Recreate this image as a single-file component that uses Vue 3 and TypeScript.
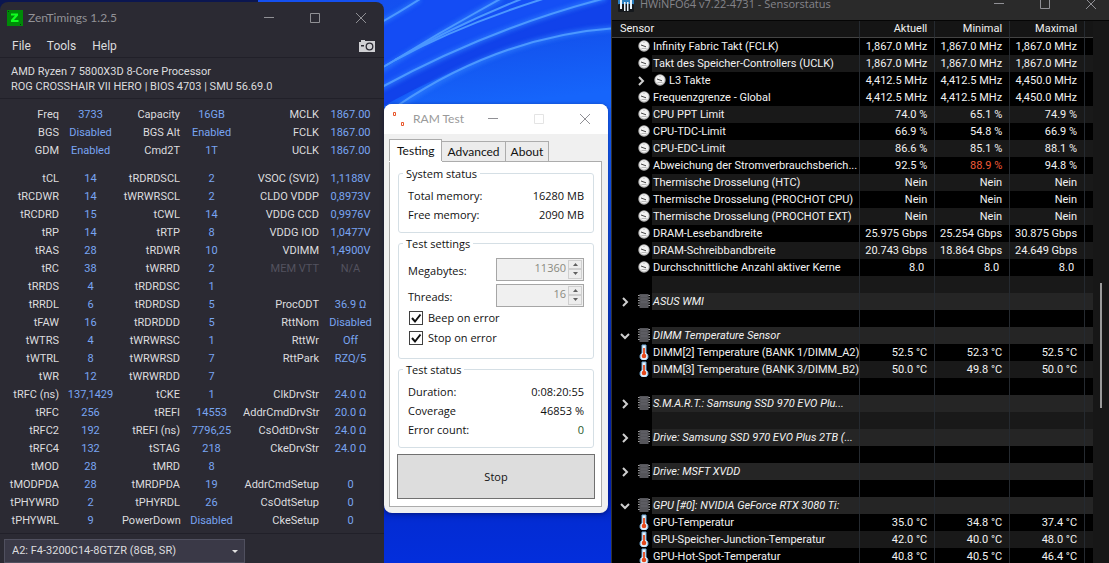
<script setup lang="ts">
import { ref } from 'vue'

type Pair = [label: string, value: string]

const clocks: Pair[][] = [
  [['Freq', '3733'], ['Capacity', '16GB'], ['MCLK', '1867.00']],
  [['BGS', 'Disabled'], ['BGS Alt', 'Enabled'], ['FCLK', '1867.00']],
  [['GDM', 'Enabled'], ['Cmd2T', '1T'], ['UCLK', '1867.00']],
]

const timings: Pair[][] = [
  [['tCL', '14'], ['tRDRDSCL', '2'], ['VSOC (SVI2)', '1,1188V']],
  [['tRCDWR', '14'], ['tWRWRSCL', '2'], ['CLDO VDDP', '0,8973V']],
  [['tRCDRD', '15'], ['tCWL', '14'], ['VDDG CCD', '0,9976V']],
  [['tRP', '14'], ['tRTP', '8'], ['VDDG IOD', '1,0477V']],
  [['tRAS', '28'], ['tRDWR', '10'], ['VDIMM', '1,4900V']],
  [['tRC', '38'], ['tWRRD', '2'], ['MEM VTT', 'N/A']],
  [['tRRDS', '4'], ['tRDRDSC', '1'], ['', '']],
  [['tRRDL', '6'], ['tRDRDSD', '5'], ['ProcODT', '36.9 Ω']],
  [['tFAW', '16'], ['tRDRDDD', '5'], ['RttNom', 'Disabled']],
  [['tWTRS', '4'], ['tWRWRSC', '1'], ['RttWr', 'Off']],
  [['tWTRL', '8'], ['tWRWRSD', '7'], ['RttPark', 'RZQ/5']],
  [['tWR', '12'], ['tWRWRDD', '7'], ['', '']],
  [['tRFC (ns)', '137,1429'], ['tCKE', '1'], ['ClkDrvStr', '24.0 Ω']],
  [['tRFC', '256'], ['tREFI', '14553'], ['AddrCmdDrvStr', '20.0 Ω']],
  [['tRFC2', '192'], ['tREFI (ns)', '7796,25'], ['CsOdtDrvStr', '24.0 Ω']],
  [['tRFC4', '132'], ['tSTAG', '218'], ['CkeDrvStr', '24.0 Ω']],
  [['tMOD', '28'], ['tMRD', '8'], ['', '']],
  [['tMODPDA', '28'], ['tMRDPDA', '19'], ['AddrCmdSetup', '0']],
  [['tPHYWRD', '2'], ['tPHYRDL', '26'], ['CsOdtSetup', '0']],
  [['tPHYWRL', '9'], ['PowerDown', 'Disabled'], ['CkeSetup', '0']],
]

type Kind = 'clock' | 'temp' | 'group' | 'blank'
interface Row {
  kind: Kind
  name?: string
  values?: string[]
  shaded?: boolean
  arrow?: 'right' | 'down'
  child?: boolean
  warn?: boolean
}

const rows: Row[] = [
  { kind: 'clock', name: 'Infinity Fabric Takt (FCLK)', values: ['1,867.0 MHz', '1,867.0 MHz', '1,867.0 MHz'] },
  { kind: 'clock', name: 'Takt des Speicher-Controllers (UCLK)', values: ['1,867.0 MHz', '1,867.0 MHz', '1,867.0 MHz'], shaded: true },
  { kind: 'clock', name: 'L3 Takte', values: ['4,412.5 MHz', '4,412.5 MHz', '4,450.0 MHz'], arrow: 'right', child: true },
  { kind: 'clock', name: 'Frequenzgrenze - Global', values: ['4,412.5 MHz', '4,412.5 MHz', '4,450.0 MHz'] },
  { kind: 'clock', name: 'CPU PPT Limit', values: ['74.0 %', '65.1 %', '74.9 %'], shaded: true },
  { kind: 'clock', name: 'CPU-TDC-Limit', values: ['66.9 %', '54.8 %', '66.9 %'] },
  { kind: 'clock', name: 'CPU-EDC-Limit', values: ['86.6 %', '85.1 %', '88.1 %'], shaded: true },
  { kind: 'clock', name: 'Abweichung der Stromverbrauchsberich...', values: ['92.5 %', '88.9 %', '94.8 %'], warn: true },
  { kind: 'clock', name: 'Thermische Drosselung (HTC)', values: ['Nein', 'Nein', 'Nein'], shaded: true },
  { kind: 'clock', name: 'Thermische Drosselung (PROCHOT CPU)', values: ['Nein', 'Nein', 'Nein'] },
  { kind: 'clock', name: 'Thermische Drosselung (PROCHOT EXT)', values: ['Nein', 'Nein', 'Nein'], shaded: true },
  { kind: 'clock', name: 'DRAM-Lesebandbreite', values: ['25.975 Gbps', '25.254 Gbps', '30.875 Gbps'] },
  { kind: 'clock', name: 'DRAM-Schreibbandbreite', values: ['20.743 Gbps', '18.864 Gbps', '24.649 Gbps'], shaded: true },
  { kind: 'clock', name: 'Durchschnittliche Anzahl aktiver Kerne', values: ['8.0 ', '8.0 ', '8.0 '] },
  { kind: 'blank', shaded: true },
  { kind: 'group', name: 'ASUS WMI', arrow: 'right' },
  { kind: 'blank' },
  { kind: 'group', name: 'DIMM Temperature Sensor', arrow: 'down' },
  { kind: 'temp', name: 'DIMM[2] Temperature (BANK 1/DIMM_A2)', values: ['52.5 °C', '52.3 °C', '52.5 °C'] },
  { kind: 'temp', name: 'DIMM[3] Temperature (BANK 3/DIMM_B2)', values: ['50.0 °C', '49.8 °C', '50.0 °C'], shaded: true },
  { kind: 'blank' },
  { kind: 'group', name: 'S.M.A.R.T.: Samsung SSD 970 EVO Plu...', arrow: 'right' },
  { kind: 'blank', shaded: true },
  { kind: 'group', name: 'Drive: Samsung SSD 970 EVO Plus 2TB (...', arrow: 'right' },
  { kind: 'blank' },
  { kind: 'group', name: 'Drive: MSFT XVDD', arrow: 'right' },
  { kind: 'blank' },
  { kind: 'group', name: 'GPU [#0]: NVIDIA GeForce RTX 3080 Ti:', arrow: 'down' },
  { kind: 'temp', name: 'GPU-Temperatur', values: ['35.0 °C', '34.8 °C', '37.4 °C'] },
  { kind: 'temp', name: 'GPU-Speicher-Junction-Temperatur', values: ['42.0 °C', '40.0 °C', '48.0 °C'], shaded: true },
  { kind: 'temp', name: 'GPU-Hot-Spot-Temperatur', values: ['40.8 °C', '40.5 °C', '46.4 °C'] },
]

const beep = ref(true)
const stopOnError = ref(true)
const megabytes = ref('11360')
const threads = ref('16')
</script>

<template>
  <main class="desktop">
    <svg class="wallpaper" viewBox="0 0 1109 563" preserveAspectRatio="none" aria-hidden="true">
      <defs>
        <linearGradient id="sky" x1="0" y1="0" x2="0" y2="1">
          <stop offset="0" stop-color="#1450f0" />
          <stop offset="0.2" stop-color="#1560fa" />
          <stop offset="0.5" stop-color="#0c40d0" />
          <stop offset="0.7" stop-color="#0426b0" />
          <stop offset="0.88" stop-color="#0223b8" />
          <stop offset="0.93" stop-color="#032cd4" />
          <stop offset="1" stop-color="#032edc" />
        </linearGradient>
        <linearGradient id="fold" x1="0" y1="0" x2="0.3" y2="1">
          <stop offset="0" stop-color="#124be8" />
          <stop offset="1" stop-color="#1665fb" />
        </linearGradient>
        <filter id="soft" x="-10%" y="-10%" width="120%" height="120%">
          <feGaussianBlur stdDeviation="2" />
        </filter>
      </defs>
      <rect width="1109" height="563" fill="url(#sky)" />
      <rect width="258" height="10" fill="#0b1650" />
      <path d="M380 22 L420 0 L500 0 Q430 38 380 72Z" fill="#144cf4" />
      <path d="M380 72 Q450 28 520 0 L616 0 L616 2 Q490 30 380 88Z" fill="#154ff5" />
      <path d="M380 88 Q500 22 616 -2 L616 27 Q500 40 380 108Z" fill="#1142ea" />
      <path d="M395 108 Q500 38 616 27 L616 108Z" fill="url(#fold)" />
      <g fill="none" stroke="#2f80ff" stroke-width="5" opacity="0.7" filter="url(#soft)">
        <path d="M380 23 Q398 13 420 -1" />
        <path d="M380 71 Q440 32 502 -2" />
        <path d="M380 89 Q490 28 606 -2" />
        <path d="M395 109 Q500 36 616 28" />
      </g>
      <g fill="none" stroke="#4c98ff" stroke-width="2">
        <path d="M380 23 Q398 13 420 -1" />
        <path d="M380 69 Q440 32 502 -2" />
        <path d="M385 66 Q448 28 524 -2" />
        <path d="M395 60 Q460 25 546 -2" />
        <path d="M380 88 Q490 28 606 -2" />
        <path d="M397 106 Q500 36 616 28" />
      </g>
    </svg>

    <section class="zen" aria-label="ZenTimings">
      <header class="zen-title">
        <svg class="zen-logo" viewBox="0 0 16 16" aria-hidden="true">
          <rect width="16" height="16" fill="#008a08" />
          <path d="M4 3.5h7v2L7 10h4.500v2H4v-2l4-4.500H4z" fill="#10ff20" />
          <path d="M1 1h1v1H1zM13 14h1v1h-1z" fill="#03380a" />
        </svg>
        <h1>ZenTimings 1.2.5</h1>
        <div class="controls">
          <button type="button" aria-label="Minimize"><svg viewBox="0 0 12 12"><path d="M1 5.500h10" /></svg></button>
          <button type="button" aria-label="Maximize"><svg viewBox="0 0 12 12"><path d="M1.500 1.500h9v9h-9z" /></svg></button>
          <button type="button" aria-label="Close"><svg viewBox="0 0 12 12"><path d="M1 1l10 10M11 1L1 11" /></svg></button>
        </div>
      </header>
      <nav class="zen-menu">
        <button type="button">File</button>
        <button type="button">Tools</button>
        <button type="button">Help</button>
        <button type="button" class="camera" aria-label="Screenshot">
          <svg viewBox="0 0 16 12"><path d="M0 2h2V0h4v1h10v11H0z" fill="#d0d0d4" /><circle cx="10.500" cy="6.500" r="3.300" fill="none" stroke="#2b2a33" stroke-width="1.300" /><path d="M2 5h3v1.500H2z" fill="#2b2a33" /></svg>
        </button>
      </nav>
      <div class="zen-cpu">
        <p>AMD Ryzen 7 5800X3D 8-Core Processor</p>
        <p>ROG CROSSHAIR VII HERO | BIOS 4703 | SMU 56.69.0</p>
      </div>
      <table class="zen-table">
        <colgroup><col class="l1"><col class="v"><col class="l2"><col class="v"><col class="l3"><col class="v"></colgroup>
        <tbody>
          <tr v-for="(line, i) in clocks" :key="i">
            <template v-for="pair in line" :key="pair[0]"><th scope="row">{{ pair[0] }}</th><td>{{ pair[1] }}</td></template>
          </tr>
        </tbody>
        <tbody class="later">
          <tr v-for="(line, i) in timings" :key="i">
            <template v-for="(pair, j) in line" :key="j"><th scope="row" :class="{ off: pair[1] === 'N/A' }">{{ pair[0] }}</th><td :class="{ off: pair[1] === 'N/A' }">{{ pair[1] }}</td></template>
          </tr>
        </tbody>
      </table>
      <footer class="zen-foot">
        <select aria-label="Memory module"><option>A2: F4-3200C14-8GTZR (8GB, SR)</option></select>
        <svg class="caret" viewBox="0 0 6 3" aria-hidden="true"><path d="M0 0h6L3 3z" fill="#e0e0e0" /></svg>
      </footer>
    </section>

    <section class="ram" aria-label="RAM Test">
      <header class="ram-title">
        <svg class="ram-logo" viewBox="0 0 16 16" aria-hidden="true"><path d="M1.500 1.500h2v3h-2zM9.500 11.500h2v3h-2z" fill="#fff" stroke="#e8582c" /></svg>
        <h2>RAM Test</h2>
        <div class="controls">
          <button type="button" aria-label="Minimize"><svg viewBox="0 0 12 12"><path d="M1 5.500h10" /></svg></button>
          <button type="button" aria-label="Maximize" disabled><svg viewBox="0 0 12 12"><path d="M1.500 1.500h9v9h-9z" /></svg></button>
          <button type="button" aria-label="Close"><svg viewBox="0 0 12 12"><path d="M1 1l10 10M11 1L1 11" /></svg></button>
        </div>
      </header>
      <div class="ram-body">
        <div class="tabs" role="tablist">
          <button type="button" role="tab" aria-selected="true" class="active">Testing</button>
          <button type="button" role="tab" aria-selected="false">Advanced</button>
          <button type="button" role="tab" aria-selected="false">About</button>
        </div>
        <div class="pane">
          <fieldset class="status">
            <legend>System status</legend>
            <p><span>Total memory:</span><span>16280 MB</span></p>
            <p><span>Free memory:</span><span>2090 MB</span></p>
          </fieldset>
          <fieldset class="settings">
            <legend>Test settings</legend>
            <div class="field">
              <label for="mb">Megabytes:</label>
              <div class="spin">
                <input id="mb" v-model="megabytes" type="text" disabled>
                <div class="steps">
                  <button type="button" aria-label="More megabytes" disabled><svg viewBox="0 0 5 3"><path d="M0 3h5L2.500 0z" /></svg></button>
                  <button type="button" aria-label="Fewer megabytes" disabled><svg viewBox="0 0 5 3"><path d="M0 0h5L2.500 3z" /></svg></button>
                </div>
              </div>
            </div>
            <div class="field">
              <label for="threads">Threads:</label>
              <div class="spin">
                <input id="threads" v-model="threads" type="text" disabled>
                <div class="steps">
                  <button type="button" aria-label="More threads" disabled><svg viewBox="0 0 5 3"><path d="M0 3h5L2.500 0z" /></svg></button>
                  <button type="button" aria-label="Fewer threads" disabled><svg viewBox="0 0 5 3"><path d="M0 0h5L2.500 3z" /></svg></button>
                </div>
              </div>
            </div>
            <label class="check">
              <span class="box"><input v-model="beep" type="checkbox"><svg v-if="beep" viewBox="0 0 14 14"><path d="M3 7l3 3.500L11.500 3.500" /></svg></span>
              Beep on error
            </label>
            <label class="check">
              <span class="box"><input v-model="stopOnError" type="checkbox"><svg v-if="stopOnError" viewBox="0 0 14 14"><path d="M3 7l3 3.500L11.500 3.500" /></svg></span>
              Stop on error
            </label>
          </fieldset>
          <fieldset class="status">
            <legend>Test status</legend>
            <p><span>Duration:</span><span>0:08:20:55</span></p>
            <p><span>Coverage</span><span>46853 %</span></p>
            <p><span>Error count:</span><span class="zero">0</span></p>
          </fieldset>
          <button type="button" class="stop">Stop</button>
        </div>
      </div>
    </section>

    <section class="hw" aria-label="HWiNFO64">
      <header class="hw-title">
        <svg class="hw-logo" viewBox="0 0 16 16" aria-hidden="true">
          <rect width="16" height="9" rx="1" fill="#2a7fc0" />
          <rect y="8" width="16" height="8" rx="1" fill="#15181c" />
          <path d="M2 4h2v9H2zM6 6h1.500v9H6zM9 6h1.500v9H9zM12 4h2v9h-2z" fill="#e8f2fa" />
        </svg>
        <h2>HWiNFO64 v7.22-4731 - Sensorstatus</h2>
        <div class="controls">
          <button type="button" aria-label="Minimize"><svg viewBox="0 0 12 12"><path d="M1 5.500h10" /></svg></button>
          <button type="button" aria-label="Maximize"><svg viewBox="0 0 12 12"><path d="M1.500 1.500h9v9h-9z" /></svg></button>
          <button type="button" aria-label="Close"><svg viewBox="0 0 12 12"><path d="M1 1l10 10M11 1L1 11" /></svg></button>
        </div>
      </header>
      <div class="hw-body">
        <table class="hw-table">
          <colgroup><col><col class="num"><col class="num"><col class="num"><col class="rest"></colgroup>
          <thead>
            <tr><th scope="col">Sensor</th><th scope="col">Aktuell</th><th scope="col">Minimal</th><th scope="col">Maximal</th><td></td></tr>
          </thead>
          <tbody>
            <tr v-for="(row, i) in rows" :key="i" :class="[row.kind, { shaded: row.shaded }]">
              <th scope="row">
                <div class="name" :class="{ child: row.child }">
                  <span class="tree">
                    <svg v-if="row.arrow === 'right'" class="arrow" viewBox="0 0 8 10"><path d="M2 1l4 4-4 4" /></svg>
                    <svg v-if="row.arrow === 'down'" class="arrow" viewBox="0 0 10 10"><path d="M1 3l4 4 4-4" /></svg>
                  </span>
                  <span class="icon">
                    <svg v-if="row.kind === 'clock'" viewBox="0 0 12 14"><circle cx="6" cy="7" r="5.700" fill="#b8b8b8" /><circle cx="6" cy="6.800" r="4.600" fill="#f2f2f2" /><path d="M3 6l5 1.800" stroke="#444" fill="none" /><path d="M6 3v1M3.500 9.500h5" stroke="#aaa" stroke-width="0.800" /></svg>
                    <svg v-if="row.kind === 'group'" viewBox="0 0 12 14"><path d="M0 1.500h12M0 4h12M0 6.500h12M0 9h12M0 11.500h12" stroke="#a4a4a4" /><rect x="1.500" y="0" width="9" height="14" fill="#55555a" /><path d="M3 2h6M3 5h6M3 8h6" stroke="#66666c" /></svg>
                    <svg v-if="row.kind === 'temp'" viewBox="0 0 12 16"><path d="M4 1h4v8a4 4 0 1 1-4 0z" fill="#e9f2fa" stroke="#6fa9d6" /><circle cx="6" cy="12" r="2.300" fill="#e4491c" /><path d="M6 4v8" stroke="#e4491c" stroke-width="1.800" /></svg>
                  </span>
                  <span class="text">{{ row.name }}</span>
                </div>
              </th>
              <td v-for="c in 3" :key="c" :class="{ warn: row.warn && c === 2, unitless: row.values?.[0] === '8.0 ' }">{{ row.values?.[c - 1] }}</td>
              <td></td>
            </tr>
          </tbody>
        </table>
        <div class="scroll" aria-hidden="true"><div class="thumb"></div></div>
      </div>
    </section>
  </main>
</template>

<style>
body { margin: 0; background: #0330dc; }
</style>

<style scoped>
* { box-sizing: border-box; }
.desktop { position: relative; height: 100vh; overflow: hidden; font: 11px/18px Roboto, "Open Sans", sans-serif; }
.wallpaper { position: absolute; inset: 0; width: 100%; height: 100%; }
h1, h2, p, fieldset, legend { margin: 0; padding: 0; font-weight: 400; }
button, input, select { font: inherit; color: inherit; margin: 0; padding: 0; }
.controls { display: flex; margin-left: auto; }
.controls button { width: 46px; height: 32px; border: 0; background: none; display: grid; place-items: center; }
.controls svg { width: 12px; height: 12px; fill: none; stroke: #909095; stroke-width: 1; }

.zen { position: absolute; left: 0; top: 2px; width: 384px; background: #2b2a33; border-radius: 8px 8px 0 0; color: #dcdcdf; padding-bottom: 12px; }
.zen-title { display: flex; align-items: center; height: 31px; padding-left: 7px; }
.zen-title h1 { font: 12px/18px Lato, sans-serif; margin-left: 5px; color: #929297; }
.zen-logo { width: 16px; height: 16px; }
.zen-menu { display: flex; align-items: center; gap: 16px; height: 25px; padding: 2px 9px 0 12px; font: 12px/18px Roboto, sans-serif; border-bottom: 1px solid #212029; }
.zen-menu button { border: 0; background: none; }
.zen-menu .camera { margin-left: auto; height: 12px; }
.camera svg { display: block; width: 16px; height: 12px; }
.zen-cpu { padding: 6px 11px 4px; line-height: 15px; border-bottom: 1px solid #212029; }
.zen-table { width: 382px; margin-top: 7px; border-spacing: 0; table-layout: fixed; line-height: 18px; }
.zen-table th, .zen-table td { height: 18px; padding: 0; font-weight: 400; white-space: nowrap; }
.zen-table th { text-align: right; }
.zen-table td { text-align: center; color: #79a5f2; }
.zen-table .off { color: #53525f; }
.later::before { content: ""; display: block; height: 10px; }
.l1 { width: 59px; }
.l2 { width: 58px; }
.l3 { width: 76px; }
.v { width: 63px; }
.zen-foot { position: relative; margin-top: 3px; padding: 5px 4px; border-top: 1px solid #212029; }
.zen-foot select { display: block; appearance: none; width: 241px; height: 24px; padding-left: 7px; background: #3a3947; border: 1px solid #50505f; border-radius: 0; }
.caret { position: absolute; left: 232px; top: 16px; width: 6px; height: 3px; }

.ram { position: absolute; left: 384px; top: 104px; width: 224px; background: #f0f0f0; border-radius: 8px; color: #111; font-family: "Open Sans", sans-serif; box-shadow: 0 1px 4px rgba(0, 10, 60, 0.5); overflow: hidden; }
.ram-title { display: flex; align-items: center; height: 30px; padding-left: 8px; background: #fff; }
.ram-title h2 { font: 12px/18px Lato, sans-serif; margin-left: 5px; color: #9a9a9a; }
.ram-title button:disabled svg { stroke: #e4e4e4; }
.ram-logo { width: 16px; height: 16px; }
.ram-body { padding: 5px 6px 6px 5px; }
.tabs { display: flex; align-items: flex-end; height: 22px; }
.tabs button { height: 20px; padding: 0 5px; border: 1px solid #acacac; border-bottom: 0; border-left: 0; background: #ececec; font: 12px/18px Lato, sans-serif; }
.tabs .active { height: 22px; padding: 0 7px; border-left: 1px solid #acacac; background: #fff; box-shadow: 0 1px #fff; z-index: 1; }
.pane { border: 1px solid #acacac; background: #fff; padding: 3px 7px 7px 8px; display: flex; flex-direction: column; gap: 2px; }
fieldset { min-width: 0; border: 1px solid #d5dfe5; border-radius: 3px; }
legend { margin-left: 4px; padding: 0 3px; line-height: 17px; }
.status p { display: flex; justify-content: space-between; padding: 0 9px; line-height: 19px; }
.status { padding: 4px 0 8px; }
.zero { color: #2c5a2c; }
.settings { padding: 4px 0 10px; }
.field { display: flex; justify-content: space-between; align-items: center; height: 26px; padding: 0 9px; }
.field label { padding-top: 3px; }
.spin { display: flex; width: 88px; height: 23px; border: 1px solid #a6a6a6; background: #f0f0f0; padding: 1px; }
.spin input { flex: 1; min-width: 0; border: 0; background: none; text-align: right; color: #8a8a80; padding: 0 2px 2px 0; }
.steps { display: flex; flex-direction: column; width: 14px; }
.steps button { flex: 1; display: grid; place-items: center; border: 1px solid #cfcfcf; background: #ededed; }
.steps svg { display: block; width: 5px; height: 3px; fill: #606060; }
.check { display: flex; align-items: center; gap: 5px; height: 20px; padding-left: 10px; }
.box { display: grid; width: 14px; height: 14px; }
.box > * { grid-area: 1 / 1; }
.box input { appearance: none; width: 14px; height: 14px; border: 1px solid #404040; background: #fff; }
.box svg { width: 14px; height: 14px; fill: none; stroke: #111; stroke-width: 2; pointer-events: none; }
.stop { margin: 4px -1px 0; height: 45px; border: 1px solid #707070; background: #ddd; }

.hw { position: absolute; left: 611px; right: 0; top: -12px; bottom: 0; display: flex; flex-direction: column; background: #171717; color: #f2f2f2; border-left: 1px solid #333; overflow: hidden; }
.hw-title { flex: none; display: flex; align-items: center; height: 32px; padding-left: 6px; background: #2a2a2a; }
.hw-title h2 { font: 11px/18px "Open Sans", sans-serif; margin-left: 6px; color: #85858a; }
.hw-logo { width: 16px; height: 16px; }
.hw-title .controls { margin-right: -5px; }
.hw-body { display: flex; align-items: flex-start; flex: 1; min-height: 0; border-top: 1px solid #050505; }
.hw-table { flex: 1; min-width: 0; table-layout: fixed; border-spacing: 0; background: #000; line-height: 17px; }
.hw-table th, .hw-table td { height: 17px; padding: 0 7px 0 0; font-weight: 400; text-align: right; white-space: nowrap; overflow: hidden; border-right: 1px solid #252a30; }
.hw-table thead th, .hw-table thead td { height: 16px; line-height: 16px; background: #151515; border-bottom: 1px solid #444; }
.hw-table thead th:first-child { text-align: left; padding-left: 8px; }
.hw-table tbody th { padding: 0; text-align: left; }
.hw-table td:last-child { padding: 0; border-right: 0; }
.num { width: 75px; }
.rest { width: 8px; }
.name { display: flex; height: 17px; }
.tree { flex: none; width: 26px; display: flex; align-items: center; padding-left: 8px; }
.arrow { width: 10px; height: 10px; fill: none; stroke: #cfcfcf; stroke-width: 2; }
.icon { flex: none; width: 14px; display: flex; align-items: center; padding-bottom: 2px; }
.icon svg { display: block; width: 12px; height: 14px; }
.temp .icon svg { height: 16px; }
.text { flex: 1; min-width: 0; padding-left: 1px; overflow: hidden; }
.child .tree { width: 42px; padding-left: 24px; }
.shaded td, .shaded .text { background: #191919; }
.group td, .group .text { background: #252525; }
.group .text { font-style: italic; }
.hw-table .warn { color: #f05a38; }
.hw-table .unitless { padding-right: 10px; }
.scroll { flex: none; width: 16px; align-self: stretch; display: flex; flex-direction: column; align-items: center; }
.thumb { width: 2px; height: 23%; margin-top: 262px; background: #9a9a9a; }
</style>
